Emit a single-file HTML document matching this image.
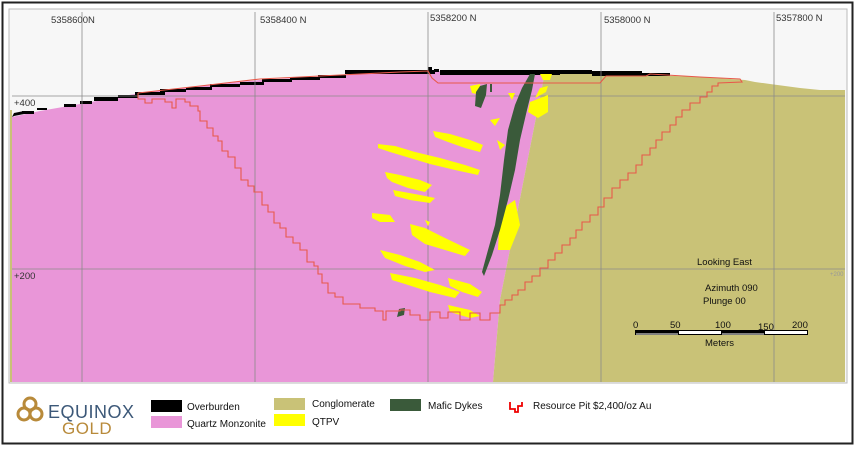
<!DOCTYPE html>
<html><head><meta charset="utf-8"><style>
html,body{margin:0;padding:0;background:#fff;}
body{width:856px;height:447px;overflow:hidden;font-family:"Liberation Sans",Arial,sans-serif;}
</style></head><body>
<svg width="856" height="447" viewBox="0 0 856 447" xmlns="http://www.w3.org/2000/svg" font-family="Liberation Sans, Arial, sans-serif">
<rect x="0" y="0" width="856" height="447" fill="#fff"/>
<rect x="2.5" y="2.5" width="850" height="441" fill="none" stroke="#222" stroke-width="2"/>
<rect x="9" y="9" width="838" height="374" fill="#f7f7f7" stroke="#bbb" stroke-width="1"/>
<!-- pink -->
<polygon fill="#e996d8" points="12,117 40,111 80,104 140,93 200,86 260,80 330,76 400,72 430,71 545,72 500,300 493,382 12,382"/>
<!-- conglomerate -->
<polygon fill="#c9c277" points="545,72 600,72 650,75 700,77 745,80 755,82 770,84 800,88 820,90 845,90 845,382 493,382 500,300"/>
<rect x="10" y="110" width="2" height="272" fill="#c9c277"/>
<!-- overburden -->
<g fill="#000">
<polygon points="12,117 14,113 24,111 24,114 14,116"/>
<rect x="22" y="111" width="12" height="3"/><rect x="37" y="108" width="10" height="2"/>
<rect x="64" y="104" width="12" height="3"/><rect x="80" y="101" width="12" height="3"/>
<rect x="94" y="97" width="24" height="4"/><rect x="118" y="95" width="20" height="3"/>
<rect x="135" y="92" width="30" height="3"/><rect x="160" y="89" width="26" height="3"/>
<rect x="186" y="87" width="26" height="3"/><rect x="210" y="84" width="30" height="3"/>
<rect x="240" y="82" width="24" height="3"/><rect x="262" y="79" width="30" height="3"/>
<rect x="290" y="77" width="30" height="3"/><rect x="318" y="75" width="28" height="3"/>
<rect x="345" y="70" width="90" height="4"/><rect x="428" y="67" width="4" height="4"/>
<rect x="434" y="69" width="5" height="3"/>
<rect x="440" y="70" width="120" height="5"/><rect x="560" y="70" width="32" height="4"/>
<rect x="592" y="71" width="50" height="5"/><rect x="640" y="73" width="30" height="3"/>
</g>
<!-- grid -->
<g stroke="#8a8a8a" stroke-width="0.8">
<line x1="82" y1="12" x2="82" y2="382"/><line x1="255" y1="12" x2="255" y2="382"/>
<line x1="428" y1="12" x2="428" y2="382"/><line x1="601" y1="12" x2="601" y2="382"/>
<line x1="774" y1="12" x2="774" y2="382"/>
<line x1="12" y1="96" x2="845" y2="96"/><line x1="12" y1="269" x2="845" y2="269"/>
</g>
<g font-size="9.5" fill="#333">
<text x="51" y="23">5358600N</text><text x="157" y="23" dx="2">5358400 N</text>
<text x="260" y="23">5358400 N</text><text x="430" y="21">5358200 N</text>
<text x="604" y="23">5358000 N</text><text x="776" y="21">5357800 N</text>
<text x="14" y="106">+400</text><text x="14" y="279">+200</text>
</g>
<rect x="150" y="14" width="60" height="12" fill="#f7f7f7"/>
<!-- yellow QTPV -->
<g fill="#ffff00">
<polygon points="378,144 395,146 415,152 440,158 465,165 480,170 478,175 455,170 430,164 410,158 390,152 378,148"/>
<polygon points="433,131 450,134 470,140 483,145 480,152 465,148 448,142 435,137"/>
<polygon points="385,172 400,175 420,180 432,185 425,192 408,188 392,182 387,178"/>
<polygon points="393,190 420,195 435,198 430,203 410,200 395,196"/>
<polygon points="372,213 390,215 395,222 380,222 372,218"/>
<polygon points="410,224 425,228 445,238 470,250 465,256 445,250 425,244 412,235"/>
<polygon points="380,250 400,255 420,262 435,270 425,272 405,266 385,258"/>
<polygon points="390,273 415,278 440,285 460,292 455,298 430,292 405,284 392,280"/>
<polygon points="448,278 470,284 482,292 478,297 462,292 450,286"/>
<polygon points="448,305 470,310 480,316 470,318 450,312"/>
<polygon points="500,210 515,200 520,225 510,250 498,250"/>
<polygon points="530,102 548,95 548,112 538,118 528,112"/>
<polygon points="470,86 480,84 481,95 472,93"/>
<polygon points="490,120 500,118 495,126"/><polygon points="497,140 505,145 500,150"/>
<polygon points="535,98 546,92 548,86 540,88"/><polygon points="540,74 552,74 550,80 543,80"/>
<polygon points="508,93 515,93 512,100"/><polygon points="425,220 430,222 428,226"/>
<polygon points="405,278 412,279 410,283"/>
</g>
<!-- mafic dykes -->
<g fill="#3a5a3a">
<polygon points="530,74 535,74 532,90 527,110 520,140 515,170 508,200 500,230 492,255 484,276 482,272 488,250 495,225 500,195 504,160 508,130 515,105 522,88"/>
<polygon points="480,86 487,84 486,95 481,108 475,106 476,92"/>
<polygon points="490,84 492,84 492,92 490,92"/>
<polygon points="399,309 405,308 404,315 397,317"/>
</g>
<!-- resource pit -->
<polyline fill="none" stroke="#e8584a" stroke-width="1.1" points="
138,93 138,99 145,99 145,103 152,103 152,99 165,99 165,102 172,102 172,108 176,108 176,99 185,99 185,102 190,102 190,106
198,106 198,111 200,111 200,121 207,121 207,128 213,128 213,136 218,136 218,141 222,141 222,151 228,151 228,157 235,157 235,168 241,168 241,180 248,180 248,186 254,186 254,192 262,192 262,205 268,205 268,212 274,212 274,223 280,223 280,228 286,228 286,237 293,237 293,243 300,243 300,250 307,250 307,262 314,262 314,266 318,266 318,274 322,274 322,283 328,283 328,293 335,293 335,297 343,297 343,304 360,304 360,308 375,308 375,311 383,311 383,320 386,320 386,311 400,311 400,310 410,310 410,315 420,315 420,320 430,320 430,312 440,312 440,318 448,318 448,312 460,312 460,320 470,320 470,313 480,313 480,320 490,320 490,313
500,313 500,305 505,305 505,300 512,300 512,295 518,295 518,290 525,290 525,282 532,282 532,276 540,276 540,268 548,268 548,260 555,260 555,253 562,253 562,245 570,245 570,238 576,238 576,230 582,230 582,222 590,222 590,215 598,215 598,207 604,207 604,198 612,198 612,188 620,188 620,180 628,180 628,173 636,173 636,165 642,165 642,155 650,155 650,148 656,148 656,140 662,140 662,132 670,132 670,125 676,125 676,117 682,117 682,110 690,110 690,103 700,103 700,97 707,97 707,92 712,92 712,86 718,86 718,83 742,82 740,79 700,77 650,74
646,76 606,76 600,83 438,83 432,78 428,71 400,72 340,75 260,79 200,86 138,93"/>
<!-- annotations -->
<g font-size="9.5" fill="#111">
<text x="697" y="265">Looking East</text>
<text x="705" y="291">Azimuth 090</text>
<text x="703" y="304">Plunge 00</text>
<text x="633" y="328">0</text><text x="670" y="328">50</text><text x="715" y="328">100</text>
<text x="758" y="330">150</text><text x="792" y="328">200</text>
<text x="705" y="346">Meters</text>
</g>
<text x="830" y="276" font-size="6" fill="#999">+200</text>
<g>
<rect x="635" y="330" width="173" height="5" fill="#000"/>
<rect x="679" y="331" width="42" height="3" fill="#fff"/>
<rect x="765" y="331" width="42" height="3" fill="#fff"/>
<rect x="636" y="333.5" width="42" height="1" fill="#fff"/>
<rect x="722" y="333.5" width="42" height="1" fill="#fff"/>
</g>
<!-- legend -->
<g>
<g fill="none" stroke="#b88a3a" stroke-width="3">
<circle cx="30" cy="404" r="6"/><circle cx="24" cy="414" r="6"/><circle cx="36" cy="414" r="6"/>
</g>
<text x="48" y="418" font-size="18" fill="#3c5878" letter-spacing="0.5">EQUINOX</text>
<text x="62" y="434" font-size="17" fill="#b88a3a" letter-spacing="0.5">GOLD</text>
<rect x="151" y="400" width="31" height="12" fill="#000"/>
<text x="187" y="410" font-size="10" fill="#111">Overburden</text>
<rect x="151" y="416" width="31" height="12" fill="#e996d8"/>
<text x="187" y="427" font-size="10" fill="#111">Quartz Monzonite</text>
<rect x="274" y="398" width="31" height="12" fill="#c9c277"/>
<text x="312" y="407" font-size="10" fill="#111">Conglomerate</text>
<rect x="274" y="414" width="31" height="12" fill="#ffff00"/>
<text x="312" y="425" font-size="10" fill="#111">QTPV</text>
<rect x="390" y="399" width="31" height="12" fill="#3a5a3a"/>
<text x="428" y="409" font-size="10" fill="#111">Mafic Dykes</text>
<polyline points="510,402 510,409 515,409 515,412 518,412 518,406 522,406 522,402" fill="none" stroke="#e00" stroke-width="1.8"/>
<text x="533" y="409" font-size="10" fill="#111">Resource Pit $2,400/oz Au</text>
</g>
</svg>
</body></html>
